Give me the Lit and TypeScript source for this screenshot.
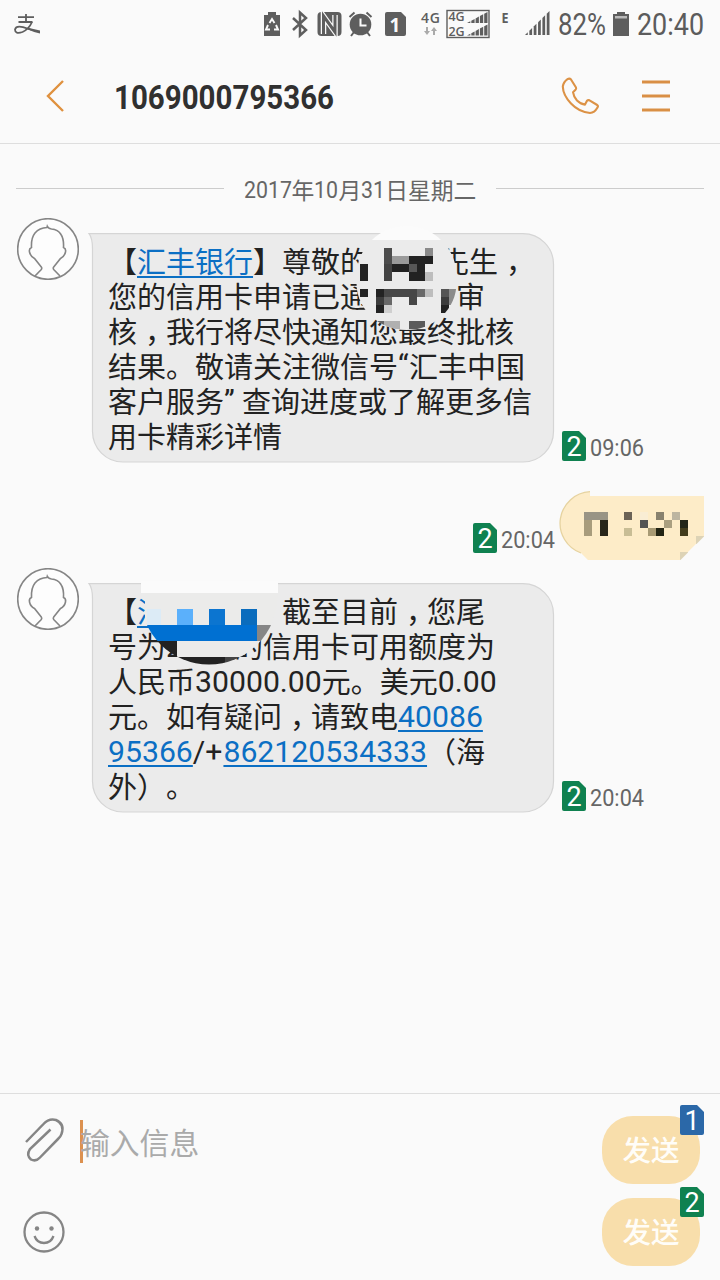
import { LitElement, html, svg, css } from "lit";
import { customElement, property } from "lit/decorators.js";

/** Narrow numerals: one line of text set to a fixed advance width. */
@customElement("narrow-text")
class NarrowText extends LitElement {
  @property() text = "";
  @property({ type: Number }) width = 50;
  @property({ type: Number }) size = 24;
  @property({ type: Number }) weight = 400;

  static styles = css`
    :host { display: block; flex: none; }
    svg { display: block; overflow: visible; }
    text { font-family: Roboto, "Liberation Sans", sans-serif; fill: currentColor; }
  `;

  render() {
    const cap = Math.round(this.size * 0.711);
    return html`<svg width=${this.width} height=${cap}>
      <text x="0" y=${cap} textLength=${this.width} lengthAdjust="spacingAndGlyphs"
        font-size=${this.size} font-weight=${this.weight}>${this.text}</text>
    </svg>`;
  }
}

@customElement("sim-badge")
class SimBadge extends LitElement {
  @property() sim = "2";
  static styles = css`
    :host { display: block; width: 24px; height: 30px; flex: none; }
    svg { display: block; overflow: visible; }
    text { font: 27px Roboto, sans-serif; fill: #fff; text-anchor: middle; }
  `;
  render() {
    return html`<svg width="24" height="30" viewBox="0 0 24 30">
      <path d="M2 0H17L24 7V28a2 2 0 0 1-2 2H2a2 2 0 0 1-2-2V2a2 2 0 0 1 2-2z"
        fill=${this.sim === "1" ? "#2b68a8" : "#0f8150"} />
      <text x="12" y="25">${this.sim}</text>
    </svg>`;
  }
}

@customElement("contact-avatar")
class ContactAvatar extends LitElement {
  static styles = css`
    :host { display: block; width: 62px; height: 62px; flex: none; }
    svg { display: block; }
  `;
  render() {
    return html`<svg width="62" height="62" viewBox="0 0 62 62" fill="none" stroke="#858585" stroke-width="1.6">
      <circle cx="31" cy="31" r="30.3" fill="#fdfdfd" />
      <path d="M18 58L24.300 51.500Q25.200 50.200 24.300 49L17.500 40.500Q13.500 38.500 12.500 34Q11.800 30.500 14.500 29.500Q14 20 18 15Q22.500 9.800 30 9.500L30.300 8.300Q31.500 10.500 34.500 11Q41 11.500 44 16.500Q47 21 46.500 29.500Q49.200 30.500 48.500 34Q47.500 38.500 43.500 40.500L36.700 49Q35.800 50.200 36.700 51.500L43 58" />
    </svg>`;
  }
}

type Cell = [number, number, number, number, string];
const cells = (list: Cell[]) =>
  list.map(([x, y, w, h, c]) => svg`<rect x=${x} y=${y} width=${w} height=${h} fill=${c} />`);

const NAME_CELLS: Cell[] = [
  [384, 248, 8, 8, "#4c4c4c"], [425, 248, 8, 8, "#8a8a8a"],
  [384, 256, 8, 8, "#4c4c4c"], [392, 256, 17, 8, "#9a9a9a"], [409, 256, 24, 8, "#222"],
  [360, 264, 8, 17, "#222"], [384, 264, 8, 17, "#434343"], [392, 264, 17, 8, "#222"],
  [409, 264, 8, 8, "#575757"], [417, 264, 8, 8, "#222"], [409, 272, 16, 9, "#222"],
  [425, 272, 8, 9, "#bdbdbd"],
  [360, 289, 8, 8, "#222"], [376, 289, 8, 8, "#222"], [384, 289, 33, 8, "#474747"],
  [417, 289, 8, 8, "#696969"], [425, 289, 8, 8, "#bdbdbd"], [441, 289, 8, 8, "#555"],
  [449, 289, 8, 16, "#8b8b8b"], [376, 297, 8, 8, "#3c3c3c"], [384, 297, 8, 8, "#686868"],
  [409, 297, 8, 8, "#474747"], [441, 297, 8, 8, "#3c3c3c"],
  [376, 305, 8, 8, "#222"], [384, 305, 8, 8, "#cfcfcf"], [441, 305, 8, 8, "#222"],
  [376, 321, 8, 8, "#666"], [384, 321, 16, 8, "#b0b0b0"], [409, 321, 16, 8, "#5b5b5b"],
];

const REPLY_CELLS: Cell[] = [
  [584, 512, 24, 8, "#999485"], [624, 512, 8, 8, "#6b6255"], [640, 512, 8, 8, "#f9edd4"],
  [656, 512, 8, 8, "#88816e"], [672, 512, 8, 8, "#bdb5a0"],
  [584, 520, 8, 16, "#a89c7c"], [600, 520, 8, 16, "#28261a"], [640, 520, 8, 8, "#545454"],
  [664, 520, 8, 8, "#aa9f80"], [680, 520, 8, 8, "#222518"],
  [624, 528, 8, 8, "#c8bd95"], [648, 528, 8, 8, "#a89a74"], [656, 528, 8, 8, "#222414"],
  [680, 528, 8, 8, "#423c1c"],
  [696, 536, 8, 8, "#ddd3b6"], [680, 552, 8, 8, "#ddd3b6"],
];

const BANK_CELLS: Cell[] = [
  [141, 583, 137, 10, "#fdfdfd"], [145, 593, 133, 32, "#ebebea"],
  [147, 609, 14, 16, "#dcebf6"],
  [177, 609, 16, 16, "#5bb0fb"], [209, 609, 16, 16, "#0c75d0"], [241, 609, 16, 16, "#0a6cbd"],
  [141, 625, 116, 16, "#0070d2"], [257, 625, 21, 16, "#868686"],
  [141, 641, 36, 16, "#222"], [177, 641, 90, 16, "#ebebea"],
  [141, 657, 84, 8, "#222"], [225, 657, 20, 8, "#444"],
];

@customElement("app-root")
class AppRoot extends LitElement {
  static styles = css`
    :host {
      display: flex; flex-direction: column; width: 720px; height: 1280px;
      overflow: hidden; background: #fafafa; color: #222;
      font-family: "Noto Sans CJK SC", sans-serif;
      text-spacing-trim: space-all;
    }
    * { box-sizing: border-box; }
    svg { display: block; flex: none; overflow: visible; }
    .status { height: 50px; padding: 0 16px 0 13px; display: flex; color: #5c5c5c; }
    .spacer { flex: 1; }
    .clock { padding-top: 12px; display: flex; }
    .clock narrow-text { margin-top: 1px; }
    .header {
      height: 94px; border-bottom: 1px solid #dedede; display: flex; align-items: center;
      padding: 0 50px 1px 46px;
    }
    .title { padding: 2px 0 0 50px; color: #303030; flex: 1; }
    .menu { margin-left: 43px; }
    .thread { flex: 1; padding: 29px 16px 0; position: relative; }
    .date { display: flex; align-items: center; height: 31px; gap: 20px; color: #666; }
    .date::before, .date::after { content: ""; flex: 1; height: 1px; background: #ccc; }
    .day { display: flex; align-items: center; font-size: 22.800px; line-height: 31px; padding-top: 1px; }
    .row { display: flex; align-items: flex-start; padding-left: 1px; }
    .first { margin-top: 14px; height: 245px; }
    .second { margin-top: 7px; height: 245px; }
    .bubblewrap { padding: 15px 0 0 11px; }
    .bubble {
      width: 465px; height: 230px; padding: 10px 0 0 18px; position: relative;
      font-size: 29px; line-height: 35px; white-space: nowrap;
    }
    .shape { position: absolute; left: 0; top: 0; }
    .lines { position: relative; }
    .line { height: 35px; display: flex; }
    .comma { width: 29px; padding-left: 8px; }
    .num { font: 30.200px/37px Roboto, sans-serif; }
    .slashplus { padding-right: 1px; }
    .quote { width: 11px; font: 30px/35px Roboto, sans-serif; }
    .quote.close { width: 18px; }
    .gap { width: 51px; }
    .gap.name { width: 71px; }
    .gap.verb { width: 87px; }
    .link { color: #0b6fc4; text-decoration: underline; text-decoration-thickness: 2px; text-underline-offset: 3px; text-decoration-skip-ink: none; }
    .stamp { display: flex; gap: 4px; color: #666; align-self: flex-end; align-items: center; }
    .in { margin: 0 0 2px 7px; }
    .stamp narrow-text { margin-top: 3px; }
    .reply { margin-top: 27px; height: 71px; display: flex; justify-content: flex-end; gap: 4px; }
    .reply .stamp { margin-bottom: 8px; }
    .mosaic { position: absolute; left: 0; top: 0; }
    .composer { height: 187px; border-top: 1px solid #dedede; display: flex; padding: 22px 20px 0 23px; }
    .tools { width: 57px; display: flex; flex-direction: column; gap: 49px; }
    .field { flex: 1; display: flex; align-items: flex-start; }
    .caret { width: 3px; height: 43px; margin-top: 4px; background: #dc9150; }
    .hint { color: #aaa; font-size: 29.800px; line-height: 43px; margin: 4px 0 0 -3px; }
    .sends { display: flex; flex-direction: column; gap: 14px; }
    .send {
      width: 98px; height: 68px; border-radius: 31px; background: #f8deab; position: relative;
      color: #fffdf8; font-size: 28.500px; line-height: 66px; font-weight: 500; text-align: center;
    }
    .send sim-badge { position: absolute; right: -4px; top: -11px; }
  `;

  private bars(x: number, y: number, w: number, h: number, n: number, gap: number) {
    const bw = (w - gap * (n - 1)) / n;
    return Array.from({ length: n }, (_, i) => {
      const l = x + i * (bw + gap);
      const t0 = y + h - (h * (l - x)) / w;
      const t1 = y + h - (h * (l + bw - x)) / w;
      return svg`<path d=${`M${l} ${y + h}V${t0}L${l + bw} ${t1}V${y + h}z`} />`;
    });
  }

  private shape() {
    return html`<svg class="shape" width="465" height="230" viewBox="0 0 465 230">
      <path d="M-1 .7H433a30.500 30.500 0 0 1 30.500 30.500V198.500a30.500 30.500 0 0 1-30.500 30.500H33a30.500 30.500 0 0 1-30.500-30.500V16Q2.500 5-1 .7z"
        fill="#ebebeb" stroke="#d5d5d5" stroke-width="1.2" />
    </svg>`;
  }

  private stamp(time: string, cls: string) {
    return html`<div class="stamp ${cls}">
      <sim-badge></sim-badge><narrow-text text=${time} width="54" size="24"></narrow-text>
    </div>`;
  }

  private statusIcons() {
    return html`<svg width="300" height="50" viewBox="258 0 300 50" fill="#5e5e5e">
      <path d="M264 15h4v-3h8v3h4v21h-16z" />
      <g fill="none" stroke="#fafafa" stroke-width="1.900">
        <path d="M269.500 23l2.500-4 2.500 4M276 25l2 4.500h-4M270 29.500h-4l2-4.500" />
      </g>
      <path d="M293 18l13 12-6 5.500V12.500l6 5.500-13 12" fill="none" stroke="#5e5e5e" stroke-width="2.500" />
      <rect x="317.500" y="12" width="24" height="24" rx="4" />
      <path d="M323.500 34V16l11.500 16V15" fill="none" stroke="#fafafa" stroke-width="5.500" />
      <path d="M323.500 35V16l11.500 16V13" fill="none" stroke="#5e5e5e" stroke-width="3" />
      <circle cx="360.500" cy="24.500" r="10.800" />
      <path d="M360.500 18.500v7h6" fill="none" stroke="#fafafa" stroke-width="2" />
      <path d="M349.500 17l5-4.500M371.500 17l-5-4.500M354 32l-3 4M367 32l3 4" fill="none" stroke="#5e5e5e" stroke-width="2" />
      <path d="M387 12h14l5 5v17a2 2 0 0 1-2 2h-17a2 2 0 0 1-2-2V14a2 2 0 0 1 2-2z" />
      <text x="395" y="32" text-anchor="middle" font-family="Open Sans" font-weight="700" font-size="19" fill="#fafafa">1</text>
      <text x="421" y="23" font-family="Open Sans" font-weight="600" font-size="14" textLength="19">4G</text>
      <path d="M426 27h2v4h2l-3 4-3-4h2zM433 35h2v-4h2l-3-4-3 4h2z" fill="#aaa" />
      <rect x="447" y="10.500" width="42" height="27" fill="none" stroke="#5e5e5e" stroke-width="1.400" />
      <text x="448.500" y="21" font-family="Open Sans" font-weight="600" font-size="12.500" textLength="16">4G</text>
      <text x="448.500" y="36" font-family="Open Sans" font-weight="600" font-size="12.500" textLength="16">2G</text>
      ${this.bars(467, 12, 20.5, 11, 5, 1)}${this.bars(467, 24.5, 20.5, 11, 5, 1)}
      <text x="501.500" y="23" font-family="Open Sans" font-weight="700" font-size="14" textLength="7" lengthAdjust="spacingAndGlyphs">E</text>
      ${this.bars(525, 11, 24.5, 24, 6, 1.6)}
    </svg>`;
  }

  render() {
    const comma = html`<span class="comma">，</span>`;
    return html`
      <div class="status">
        <svg width="28" height="50" viewBox="13 0 28 50" fill="none" stroke="#5e5e5e">
          <path d="M18 17.200h16M26 14v8M18.500 22h14" stroke-width="1.800" />
          <path d="M32 22Q29 29 22.500 32Q15 34.500 15 29.500Q16 25.500 23 27.200L32 30" stroke-width="1.800" />
          <path d="M28 27.800L40 30.500V33.500Q33 32 28 29.500z" fill="#5e5e5e" stroke="none" />
        </svg>
        <div class="spacer"></div>
        ${this.statusIcons()}
        <div class="clock">
          <narrow-text text="82%" width="48" size="31"></narrow-text>
          <svg width="31" height="24" viewBox="606 12 31 24" fill="#5e5e5e">
            <path d="M613 14h4v-2h8v2h4v22h-16z" /><path d="M615 16h12v2.500h-12z" fill="#bbb" />
          </svg>
          <narrow-text text="20:40" width="67" size="31"></narrow-text>
        </div>
      </div>

      <div class="header">
        <svg width="18" height="32" viewBox="0 0 18 32"><path d="M17 1L2 16L17 31" fill="none" stroke="#df913f" stroke-width="2.400" /></svg>
        <div class="title"><narrow-text text="1069000795366" width="220" size="34" weight="700"></narrow-text></div>
        <svg width="37" height="36" viewBox="0 0 37 36">
          <path d="M5.500 1.200Q7.500-.2 9 1.500L14 9.500Q14.500 10.800 13.500 11.800L11 14.200Q11.500 18.500 15 22.500Q19 26.300 23 26.600L25 22.800Q26 21.700 27.500 22.300L35.200 27Q36.500 28 35.500 29.500Q32.500 34.800 28 35Q17 34 9 25.500Q1 17 .8 8.500Q1.500 4 5.500 1.200z"
            fill="none" stroke="#dc9246" stroke-width="2.100" stroke-linejoin="round" />
        </svg>
        <svg class="menu" width="28" height="32" viewBox="0 0 28 32"><path d="M0 2h28M0 16h28M0 30h28" stroke="#d98f45" stroke-width="2.800" /></svg>
      </div>

      <div class="thread">
        <div class="date">
          <div class="day">
            <narrow-text text="2017" width="48" size="24"></narrow-text>年
            <narrow-text text="10" width="24" size="24"></narrow-text>月
            <narrow-text text="31" width="24" size="24"></narrow-text>日星期二
          </div>
        </div>

        <div class="row first">
          <contact-avatar></contact-avatar>
          <div class="bubblewrap"><div class="bubble">
            ${this.shape()}
            <div class="lines">
              <div class="line">【<span class="link">汇丰银行</span>】尊敬的<span class="gap name"></span>先生${comma}</div>
              <div class="line">您的信用卡申请已通<span class="gap verb"></span>审</div>
              <div class="line">核${comma}我行将尽快通知您最终批核</div>
              <div class="line">结果。敬请关注微信号<span class="quote">“</span>汇丰中国</div>
              <div class="line">客户服务<span class="quote close">”</span>查询进度或了解更多信</div>
              <div class="line">用卡精彩详情</div>
            </div>
          </div></div>
          ${this.stamp("09:06", "in")}
        </div>

        <div class="reply">
          ${this.stamp("20:04", "")}
          <svg width="145" height="71" viewBox="559 490 145 71">
            <path d="M590 491.700A31.600 31.600 0 0 0 581 553L588 560H680L704 536V496H590z" fill="#fdecc8" />
            <path d="M590 491.700A31.600 31.600 0 0 0 581 553" fill="none" stroke="#e6d3a0" stroke-width="1.300" />
            ${cells(REPLY_CELLS)}
            <path d="M704.500 536V560.500H680z" fill="#fafafa" />
          </svg>
        </div>

        <div class="row second">
          <contact-avatar></contact-avatar>
          <div class="bubblewrap"><div class="bubble">
            ${this.shape()}
            <div class="lines">
              <div class="line">【<span class="link">汇丰银行</span>】截至目前${comma}您尾</div>
              <div class="line">号为<span class="num">2</span><span class="gap"></span>的信用卡可用额度为</div>
              <div class="line">人民币<span class="num">30000.00</span>元。美元<span class="num">0.00</span></div>
              <div class="line">元。如有疑问${comma}请致电<span class="num link">40086</span></div>
              <div class="line"><span class="num link">95366</span><span class="num slashplus">/+</span><span class="num link">862120534333</span>（海</div>
              <div class="line">外）。</div>
            </div>
          </div></div>
          ${this.stamp("20:04", "in")}
        </div>

        <svg class="mosaic" width="720" height="700" viewBox="0 144 720 700">
          <defs>
            <clipPath id="a"><path d="M356.500 276A50 50 0 0 1 456.500 276V283A50 47 0 0 1 356.500 283z" /></clipPath>
            <clipPath id="b"><circle cx="209" cy="596" r="68.500" /></clipPath>
          </defs>
          <g clip-path="url(#a)">
            <rect x="350" y="240" width="110" height="92" fill="#ebebeb" />
            <rect x="350" y="220" width="110" height="20" fill="#fbfbfb" />
            ${cells(NAME_CELLS)}
          </g>
          <g clip-path="url(#b)">${cells(BANK_CELLS)}</g>
          <rect x="141" y="581" width="137" height="12" fill="#fbfbfb" />
        </svg>
      </div>

      <div class="composer">
        <div class="tools">
          <svg width="42" height="46" viewBox="23 1116 42 46">
            <path d="M26 1142L43.500 1124Q49 1118 56 1120Q65 1124 61.500 1134Q61 1136 58 1139L40 1157.500Q36 1162 31 1159.500Q26 1155 30 1149L50.500 1129.500"
              fill="none" stroke="#858585" stroke-width="2.500" />
          </svg>
          <svg width="42" height="42" viewBox="0 0 42 42" fill="none" stroke="#858585">
            <circle cx="21" cy="21" r="19.500" stroke-width="2.300" />
            <circle cx="14" cy="17.500" r="2.200" fill="#858585" stroke="none" /><circle cx="28.500" cy="17.500" r="2.200" fill="#858585" stroke="none" />
            <path d="M11.500 25Q14 32 21 32Q28 32 30.500 25" stroke-width="2.300" />
          </svg>
        </div>
        <div class="field"><div class="caret"></div><div class="hint">输入信息</div></div>
        <div class="sends">
          <div class="send">发送<sim-badge sim="1"></sim-badge></div>
          <div class="send">发送<sim-badge sim="2"></sim-badge></div>
        </div>
      </div>
    `;
  }
}
